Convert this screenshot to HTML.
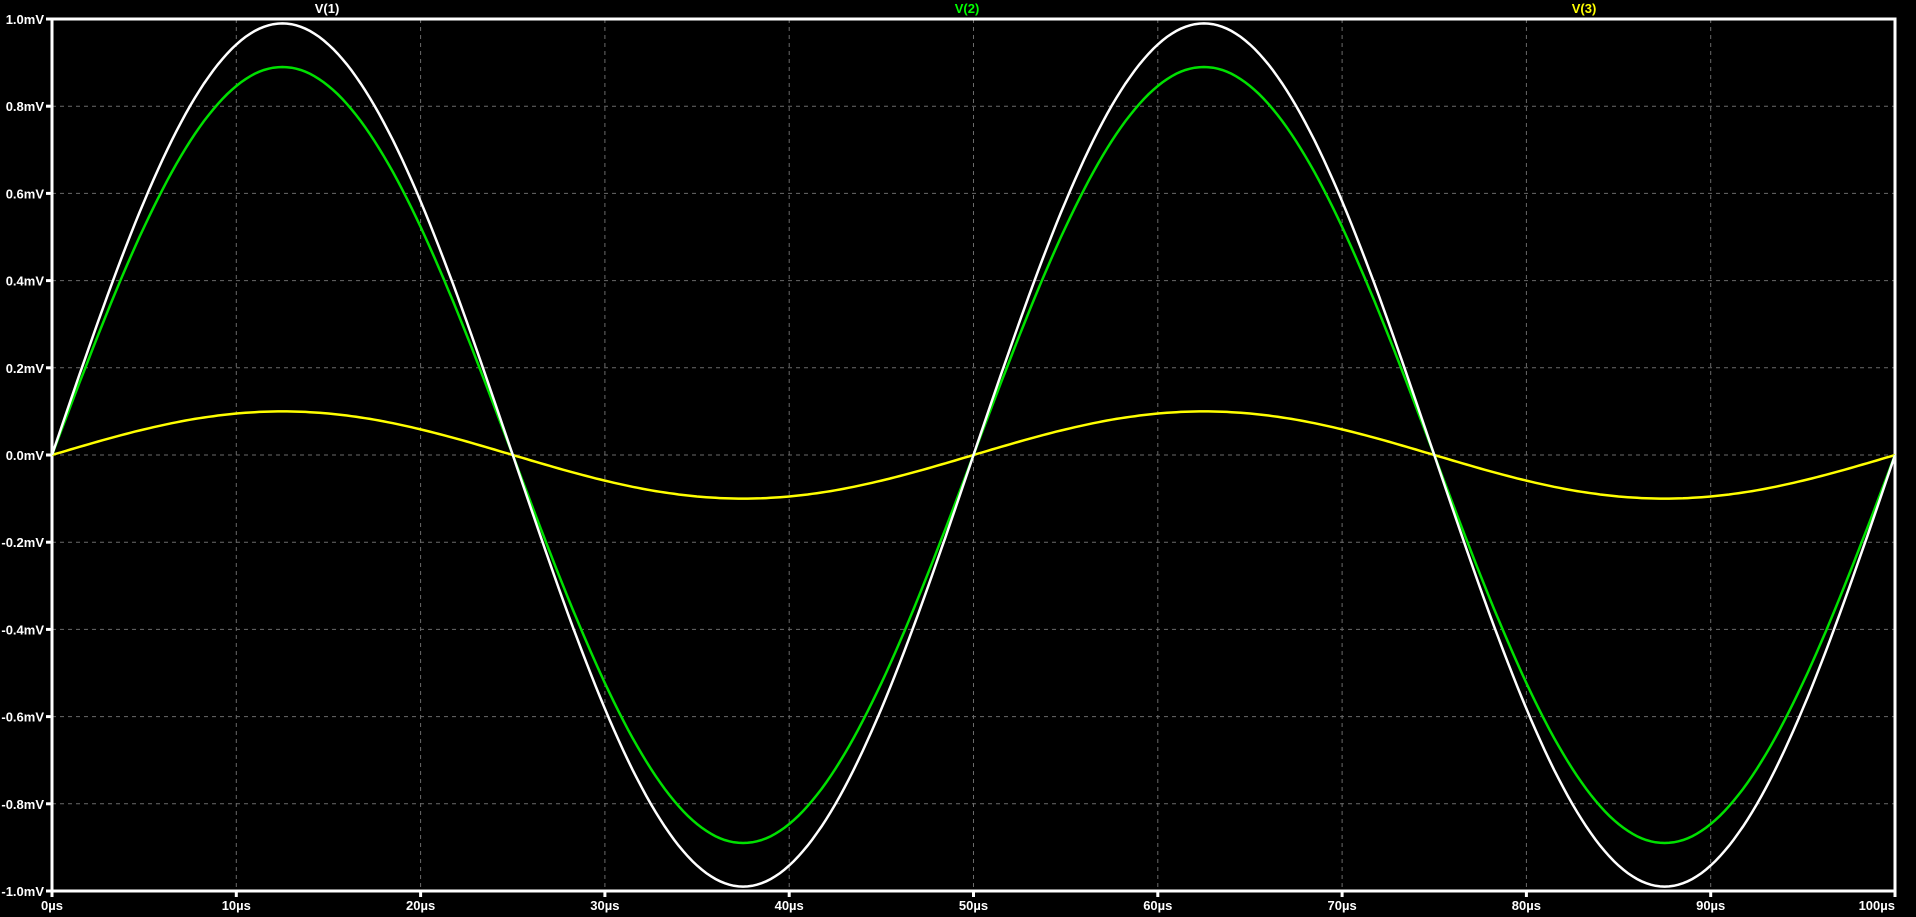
<!DOCTYPE html>
<html><head><style>
html,body{margin:0;padding:0;background:#000;width:1916px;height:917px;overflow:hidden}
svg text{font-family:"Liberation Sans",sans-serif;font-size:13px;font-weight:bold;fill:#fff}
</style></head><body>
<svg id="s" width="1916" height="917" xmlns="http://www.w3.org/2000/svg">
<g id="grid" stroke="#6a6a6a" stroke-width="1" stroke-dasharray="4,4"></g>
<g id="lab"></g>
<rect x="52" y="19" width="1843" height="872" fill="none" stroke="#fff" stroke-width="3"/>
<path id="p3" fill="none" stroke="#ffff00" stroke-width="2.5"/>
<path id="p2" fill="none" stroke="#00e000" stroke-width="2.5"/>
<path id="p1" fill="none" stroke="#fff" stroke-width="2.5"/>
<text x="327" y="13" text-anchor="middle">V(1)</text>
<text x="967" y="13" text-anchor="middle" style="fill:#00ff00">V(2)</text>
<text x="1584" y="13" text-anchor="middle" style="fill:#ffff00">V(3)</text>
</svg>
<script>
var L=52,T=19,W=1843,H=872,g=document.getElementById('grid'),lab=document.getElementById('lab'),ns='http://www.w3.org/2000/svg';
function el(n,a,p,t){var e=document.createElementNS(ns,n);for(var k in a)e.setAttribute(k,a[k]);if(t)e.textContent=t;p.appendChild(e);return e;}
for(var i=0;i<=10;i++){var x=L+W*i/10,y=T+H*i/10;
if(i>0&&i<10){el('line',{x1:x,y1:T,x2:x,y2:T+H},g);el('line',{x1:L,y1:y,x2:L+W,y2:y},g);}
el('line',{x1:x,y1:T+H,x2:x,y2:T+H+6,stroke:'#fff','stroke-width':3},lab);
el('line',{x1:L-6,y1:y,x2:L,y2:y,stroke:'#fff','stroke-width':3},lab);
var v=(1-0.2*i).toFixed(1);if(v=='-0.0')v='0.0';
el('text',{x:L-8,y:y+5,'text-anchor':'end'},lab,v+'mV');
el('text',{x:x,y:T+H+19,'text-anchor':i==10?'end':'middle'},lab,(i*10)+'\u00b5s');}
function P(id,a){var d='';for(var k=0;k<=400;k++){var t=k/400*100,x=L+W*k/400,y=T+H/2-a*Math.sin(2*Math.PI*t/50)*H/2;d+=(k?'L':'M')+x.toFixed(1)+','+y.toFixed(1);}document.getElementById(id).setAttribute('d',d);}
P('p1',0.99);P('p2',0.89);P('p3',0.1);
</script>
</body></html>
